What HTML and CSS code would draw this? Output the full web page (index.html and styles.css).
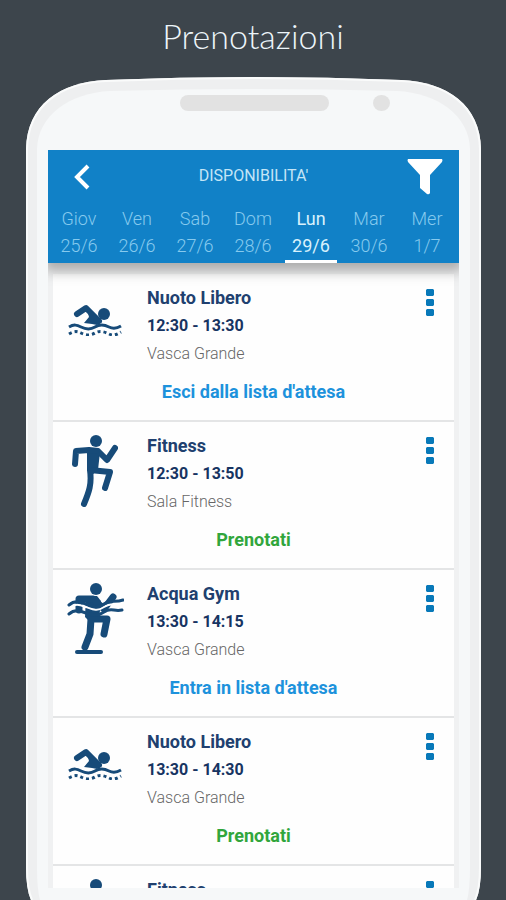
FILE: index.html
```html
<!DOCTYPE html>
<html lang="it">
<head>
<meta charset="utf-8">
<meta name="viewport" content="width=device-width, initial-scale=1">
<title>Prenotazioni</title>
<link rel="stylesheet" href="styles.css">
</head>
<body>
<svg class="symbols" aria-hidden="true">
  <symbol id="swim" viewBox="0 0 54 32">
    <path d="M9 10 18 4 31 17" fill="none" stroke="currentColor" stroke-width="6" stroke-linecap="round" stroke-linejoin="round"/>
    <path d="M18 2 34 18 29 21 24 20 16 19 21 13Z" fill="currentColor"/>
    <circle cx="36" cy="10" r="6" fill="currentColor"/>
    <path d="M1 23C6 20 9 21 13 23S22 26 27 23 37 21 41 23 48 25 53 22" fill="none" stroke="currentColor" stroke-width="3"/>
    <path d="M1 30C6 27 9 27 13 29S22 32 27 29 37 28 41 30 48 31 53 28" fill="none" stroke="currentColor" stroke-width="3" stroke-dasharray="3 3"/>
  </symbol>
  <symbol id="run" viewBox="0 0 46 74">
    <circle cx="24" cy="7" r="6" fill="currentColor"/>
    <path d="M14 14H25L28 18 26 36 21 40 15 36 15 19Z" fill="currentColor"/>
    <path d="M3 30 4 17 17 16 26 17 35 26 43 14M18 36 38 38 33 54M18 36C20 50 17 58 12 70" fill="none" stroke="currentColor" stroke-width="6" stroke-linecap="round" stroke-linejoin="round"/>
  </symbol>
  <symbol id="aqua" viewBox="0 0 58 74">
    <circle cx="30" cy="7" r="6" fill="currentColor"/>
    <path d="M20 14H31L35 19 33 38 24 40 19 35Z" fill="currentColor"/>
    <path d="M13 28V17H27L38 27 47 15M25 37H41L38 52M25 37 24 52 19 65" fill="none" stroke="currentColor" stroke-width="7" stroke-linecap="round" stroke-linejoin="round"/>
    <path d="M3 26C9 21 14 23 20 25S31 30 38 25 48 24 57 21" fill="none" stroke="#fff" stroke-width="2"/>
    <path d="M3 23C9 18 14 20 20 22S31 27 38 22 48 21 57 18M3 32C9 27 14 29 20 31S31 35 38 30 48 30 56 28" fill="none" stroke="currentColor" stroke-width="3" stroke-linecap="round"/>
    <path d="M11 70H35" stroke="currentColor" stroke-width="4" stroke-linecap="round"/>
  </symbol>
  <symbol id="dots" viewBox="0 0 8 28">
    <path d="M1 0H7L8 1V6L7 7H1L0 6V1ZM1 10H7L8 11V16L7 17H1L0 16V11ZM1 20H7L8 21V26L7 27H1L0 26V21Z" fill="currentColor"/>
  </symbol>
</svg>

<h1 class="title">Prenotazioni</h1>

<main class="phone">
  <svg class="shell" viewBox="0 0 456 823" preserveAspectRatio="none" aria-hidden="true">
    <path d="M5 823Q0 812 0 790V72C1 28 34 5 80 3Q228-3 376 3C422 5 455 28 456 72V790Q456 812 451 823Z" fill="#eeeff0"/>
    <path d="M6 823Q1 812 1 790V72C2 29 34 6 80 4Q228-2 376 4C422 6 454 29 455 72V790Q455 812 450 823" fill="none" stroke="#fafbfb" stroke-width="2"/>
    <path d="M14 823Q11 812 11 790V72C12 38 44 16 84 14Q228 10 372 14C412 16 444 38 445 72V790Q445 812 442 823Z" fill="#f6f8f9"/>
  </svg>
  <div class="sensors"><span class="speaker"></span><span class="camera"></span></div>

  <section class="screen">
    <header class="header">
      <div class="bar">
        <button class="back" type="button" aria-label="Indietro"><svg width="16" height="26" viewBox="0 0 16 26" aria-hidden="true"><path d="M14 2 3 13 14 24" fill="none" stroke="#fff" stroke-width="4"/></svg></button>
        <h2 class="heading">DISPONIBILITA'</h2>
        <button class="filter" type="button" aria-label="Filtra"><svg width="36" height="36" viewBox="0 0 36 36" aria-hidden="true"><path d="M1 0H35Q36 1 35 3L23 16V34Q22 36 20 35L13 29V16L1 3Q0 1 1 0Z" fill="#fff"/></svg></button>
      </div>
      <nav class="days">
        <a class="day" href="#">Giov<br>25/6</a>
        <a class="day" href="#">Ven<br>26/6</a>
        <a class="day" href="#">Sab<br>27/6</a>
        <a class="day" href="#">Dom<br>28/6</a>
        <a class="day active" href="#" aria-current="date">Lun<br>29/6</a>
        <a class="day" href="#">Mar<br>30/6</a>
        <a class="day" href="#">Mer<br>1/7</a>
      </nav>
    </header>

    <ul class="list">
      <li class="item">
        <svg class="icon swim" aria-hidden="true"><use href="#swim"/></svg>
        <div class="info"><h3 class="name">Nuoto Libero</h3><p class="time">12:30 - 13:30</p><p class="room">Vasca Grande</p></div>
        <button class="more" type="button" aria-label="Altro"><svg class="dots" aria-hidden="true"><use href="#dots"/></svg></button>
        <button class="action" type="button">Esci dalla lista d'attesa</button>
      </li>
      <li class="item">
        <svg class="icon run" aria-hidden="true"><use href="#run"/></svg>
        <div class="info"><h3 class="name">Fitness</h3><p class="time">12:30 - 13:50</p><p class="room">Sala Fitness</p></div>
        <button class="more" type="button" aria-label="Altro"><svg class="dots" aria-hidden="true"><use href="#dots"/></svg></button>
        <button class="action book" type="button">Prenotati</button>
      </li>
      <li class="item">
        <svg class="icon aqua" aria-hidden="true"><use href="#aqua"/></svg>
        <div class="info"><h3 class="name">Acqua Gym</h3><p class="time">13:30 - 14:15</p><p class="room">Vasca Grande</p></div>
        <button class="more" type="button" aria-label="Altro"><svg class="dots" aria-hidden="true"><use href="#dots"/></svg></button>
        <button class="action" type="button">Entra in lista d'attesa</button>
      </li>
      <li class="item">
        <svg class="icon swim" aria-hidden="true"><use href="#swim"/></svg>
        <div class="info"><h3 class="name">Nuoto Libero</h3><p class="time">13:30 - 14:30</p><p class="room">Vasca Grande</p></div>
        <button class="more" type="button" aria-label="Altro"><svg class="dots" aria-hidden="true"><use href="#dots"/></svg></button>
        <button class="action book" type="button">Prenotati</button>
      </li>
      <li class="item">
        <svg class="icon run" aria-hidden="true"><use href="#run"/></svg>
        <div class="info"><h3 class="name">Fitness</h3></div>
        <button class="more" type="button" aria-label="Altro"><svg class="dots" aria-hidden="true"><use href="#dots"/></svg></button>
      </li>
    </ul>
  </section>
</main>
</body>
</html>
```

FILE: styles.css
```css
* {
  box-sizing: border-box;
  margin: 0;
  padding: 0;
}

body {
  display: flex;
  flex-direction: column;
  height: 100vh;
  overflow: hidden;
  background: #3d454c;
  font-family: Roboto, "Liberation Sans", sans-serif;
}

button {
  border: 0;
  background: none;
  font: inherit;
  cursor: pointer;
}

svg {
  display: block;
}

.symbols {
  position: absolute;
  width: 0;
  height: 0;
}

.title {
  padding-top: 16px;
  height: 77px;
  color: #edf5fa;
  font: 300 34px/40px Lato, sans-serif;
  text-align: center;
}

.phone {
  position: relative;
  display: flex;
  flex: 1;
  flex-direction: column;
  min-height: 0;
  margin: 0 25px 0 26px;
  padding: 0 22px 12px;
}

.shell {
  position: absolute;
  inset: 0;
  width: 100%;
  height: 100%;
}

.sensors {
  position: relative;
  display: flex;
  flex: none;
  justify-content: flex-end;
  gap: 44px;
  height: 73px;
  padding: 18px 69px 0 0;
}

.speaker {
  width: 149px;
  height: 16px;
  border-radius: 8px;
  background: #e2e2e2;
}

.camera {
  width: 17px;
  height: 16px;
  border-radius: 50%;
  background: #e2e2e2;
}

.screen {
  position: relative;
  display: flex;
  flex: 1;
  flex-direction: column;
  min-height: 0;
  overflow: hidden;
  background: #f0f1f2;
}

.header {
  position: relative;
  flex: none;
  background: #1181c7;
  box-shadow: 0 4px 12px 4px #aaa;
}

.bar {
  display: grid;
  grid-template-columns: 48px 1fr 48px;
  align-items: start;
  height: 55px;
  padding: 9px 10px 0;
}

.back {
  justify-self: center;
  padding: 5px 0;
}

.heading {
  color: #c4e5f6;
  font-size: 16px;
  font-weight: 400;
  line-height: 34px;
  text-align: center;
}

.filter {
  justify-self: end;
  margin-right: 6px;
}

.days {
  display: grid;
  grid-template-columns: repeat(7, 1fr);
  padding: 0 3px 0 2px;
}

.day {
  height: 58px;
  margin: 0 3px;
  border-bottom: 3px solid transparent;
  color: #86caee;
  font-size: 18px;
  font-weight: 300;
  line-height: 27px;
  text-align: center;
  text-decoration: none;
}

.day.active {
  border-color: #fff;
  color: #d8f1fc;
  font-weight: 400;
}

.list {
  flex: 1;
  margin: 11px 5px 0;
  overflow: hidden;
  background: #fefefe;
  list-style: none;
}

.item {
  display: grid;
  grid-template: 92px 52px / 94px 1fr 48px;
  height: 148px;
  border-bottom: 2px solid #e4e5e6;
}

.icon {
  margin-left: 15px;
  color: #174b79;
}

.swim {
  width: 54px;
  height: 32px;
  margin-top: 30px;
}

.run {
  width: 46px;
  height: 74px;
  margin: 12px 0 0 19px;
}

.aqua {
  width: 58px;
  height: 74px;
  margin: 12px 0 0 13px;
}

.info {
  padding-top: 10px;
  line-height: 28px;
}

.name {
  color: #20406f;
  font-size: 18px;
  font-weight: 700;
}

.time {
  color: #173462;
  font-size: 16px;
  font-weight: 700;
}

.room {
  color: #666;
  font-size: 16px;
  font-weight: 300;
}

.more {
  align-self: start;
  justify-self: center;
  margin-top: 15px;
  color: #0879b9;
}

.dots {
  width: 8px;
  height: 28px;
}

.action {
  grid-column: 1 / -1;
  align-self: start;
  justify-self: center;
  margin-top: 12px;
  color: #1d92dc;
  font-size: 18px;
  font-weight: 700;
  line-height: 28px;
}

.book {
  color: #31a63c;
}
```
